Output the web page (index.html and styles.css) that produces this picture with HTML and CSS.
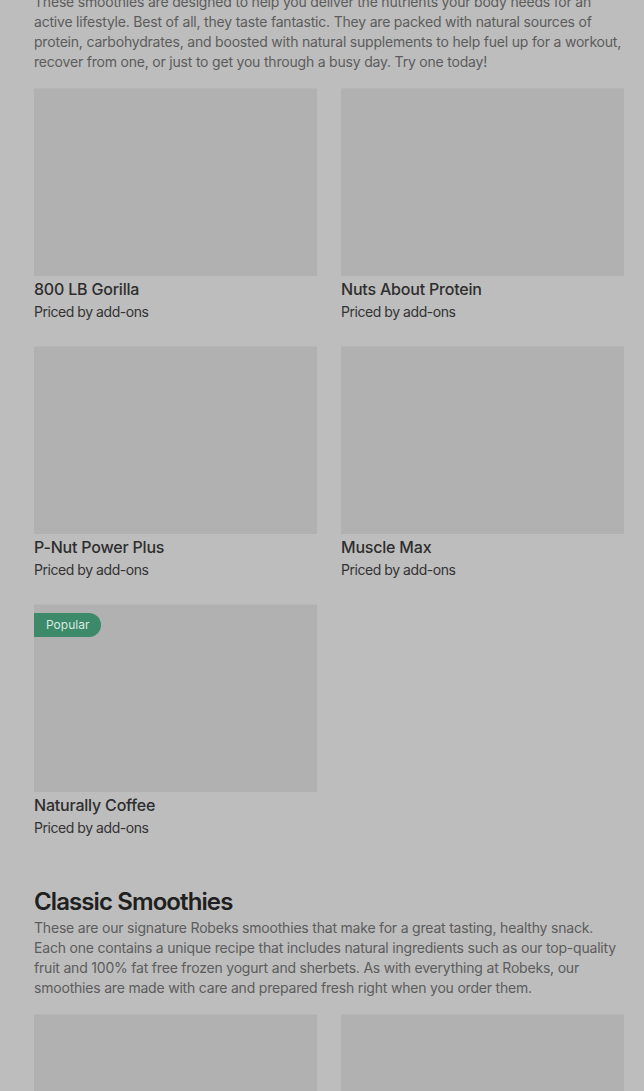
FILE: index.html
```html
<!DOCTYPE html>
<html lang="en">
<head>
    <meta charset="UTF-8">
    <meta name="viewport" content="width=device-width, initial-scale=1.0">
    <title>Robeks Menu</title>
    <link rel="stylesheet" href="styles.css">
</head>
<body>
    <div class="page">
        <section class="menu-section">
            <p class="section-desc">These smoothies are designed to help you deliver the nutrients your body needs for an active lifestyle. Best of all, they taste fantastic. They are packed with natural sources of protein, carbohydrates, and boosted with natural supplements to help fuel up for a workout, recover from one, or just to get you through a busy day. Try one today!</p>

            <div class="item-grid">
                <div class="item">
                    <div class="item-image"></div>
                    <div class="item-name">800 LB Gorilla</div>
                    <div class="item-price">Priced by add-ons</div>
                </div>
                <div class="item">
                    <div class="item-image"></div>
                    <div class="item-name">Nuts About Protein</div>
                    <div class="item-price">Priced by add-ons</div>
                </div>
                <div class="item">
                    <div class="item-image"></div>
                    <div class="item-name">P-Nut Power Plus</div>
                    <div class="item-price">Priced by add-ons</div>
                </div>
                <div class="item">
                    <div class="item-image"></div>
                    <div class="item-name">Muscle Max</div>
                    <div class="item-price">Priced by add-ons</div>
                </div>
                <div class="item">
                    <div class="item-image">
                        <span class="badge">Popular</span>
                    </div>
                    <div class="item-name">Naturally Coffee</div>
                    <div class="item-price">Priced by add-ons</div>
                </div>
            </div>
        </section>

        <section class="menu-section">
            <h2 class="section-title">Classic Smoothies</h2>
            <p class="section-desc">These are our signature Robeks smoothies that make for a great tasting, healthy snack. Each one contains a unique recipe that includes natural ingredients such as our top-quality fruit and 100% fat free frozen yogurt and sherbets. As with everything at Robeks, our smoothies are made with care and prepared fresh right when you order them.</p>

            <div class="item-grid">
                <div class="item">
                    <div class="item-image"></div>
                </div>
                <div class="item">
                    <div class="item-image"></div>
                </div>
            </div>
        </section>
    </div>
</body>
</html>
```

FILE: styles.css
```css
* {
    box-sizing: border-box;
}

body {
    margin: 0;
    background-color: #bdbdbd;
    font-family: Inter, Roboto, "Liberation Sans", sans-serif;
    color: #2b2b2b;
    overflow: hidden;
}

.page {
    margin-top: -8px;
    padding: 0 20px 0 34px;
}

.menu-section {
    margin-bottom: 48px;
}

.section-title {
    margin: 0;
    font-size: 24px;
    line-height: 32px;
    font-weight: 600;
    letter-spacing: -0.9px;
    color: #202020;
}

.section-desc {
    margin: 0 0 16px;
    font-size: 14px;
    line-height: 20px;
    letter-spacing: -0.2px;
    color: #5c5c5c;
}

.item-grid {
    display: grid;
    grid-template-columns: 1fr 1fr;
    column-gap: 24px;
    row-gap: 24px;
}

.item-image {
    position: relative;
    height: 188px;
    background-color: #b1b1b1;
    border-top: 1px solid #b6b6b6;
}

.item-name {
    margin-top: 1px;
    font-size: 16px;
    line-height: 24px;
    font-weight: 500;
    letter-spacing: -0.2px;
    color: #2e2e2e;
}

.item-price {
    padding-top: 1px;
    font-size: 14px;
    line-height: 20px;
    letter-spacing: -0.45px;
    color: #333;
}

/* badge over the image */
.badge {
    position: absolute;
    top: 8px;
    left: 0;
    height: 24px;
    padding: 0 12px;
    border-radius: 0 12px 12px 0;
    background-color: #3c8a69;
    color: #d9e9e1;
    font-size: 12px;
    line-height: 24px;
}
```
